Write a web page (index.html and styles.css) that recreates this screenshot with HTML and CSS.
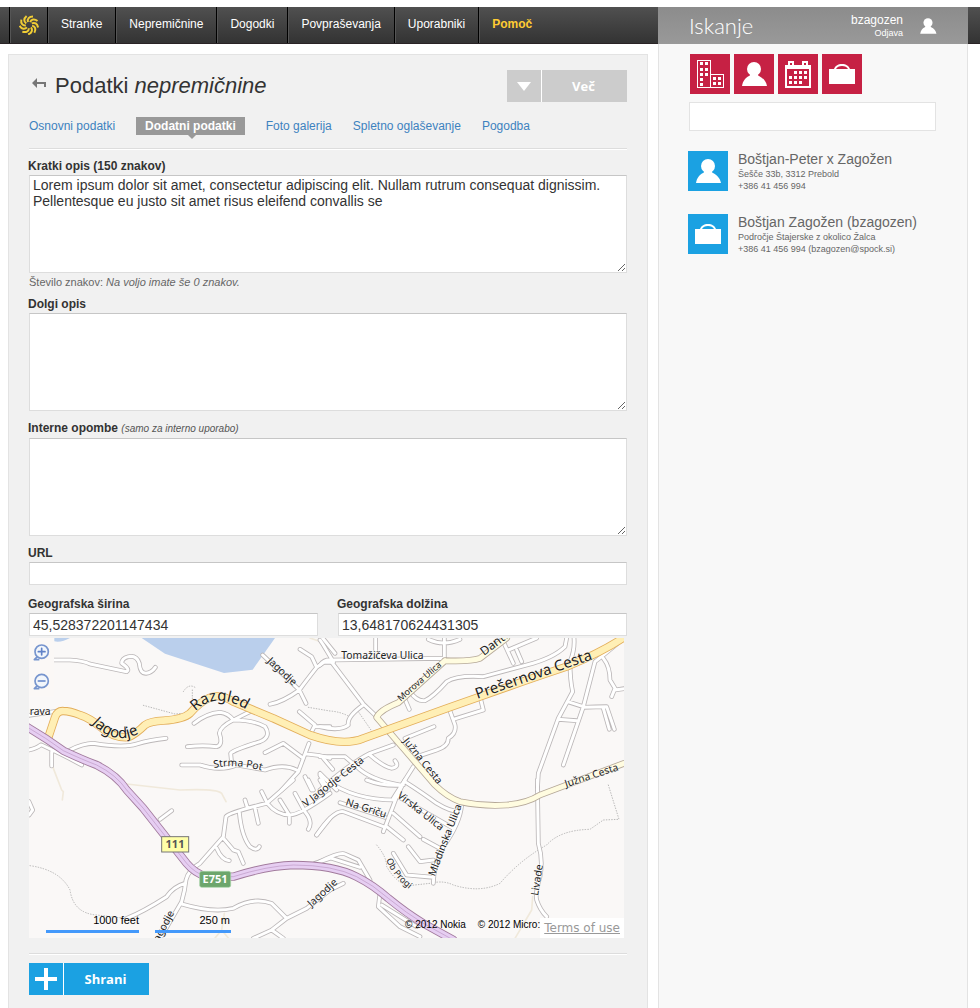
FILE: index.html
```html
<!DOCTYPE html>
<html lang="sl">
<head>
<meta charset="utf-8">
<title>Podatki nepremičnine</title>
<link rel="stylesheet" href="styles.css">
</head>
<body>
<svg class="sprite" aria-hidden="true">
  <symbol id="person" viewBox="0 0 40 40"><circle cx="20" cy="15" r="7"/><path d="M16 19h8c0 2 0 3 1 3 4 2 7 5 8 10H8c1-5 3-8 7-10 1 0 1-1 1-3z"/></symbol>
  <symbol id="bag" viewBox="0 0 40 40"><path d="M7 15h5c1-3 4-5 8-5s7 2 8 5h5v15H7zM14 15h12c-1-2-3-3-6-3s-5 1-6 3z" fill-rule="evenodd"/></symbol>
  <symbol id="buildings" viewBox="0 0 40 40"><path d="M7 6h14v14h13v14H7zM8 7v26h12V7zM21 21v12h12V21z" fill-rule="evenodd"/><path d="M10 8h3v3h-3zm5 0h3v3h-3zm-5 6h3v3h-3zm5 0h3v3h-3zm-5 5h3v3h-3zm5 0h3v3h-3zm-5 5h3v3h-3zm0 5h3v3h-3zm13-6h3v3h-3zm5 0h3v3h-3zm-5 5h3v3h-3zm5 0h3v3h-3z"/></symbol>
  <symbol id="calendar" viewBox="0 0 40 40"><path d="M7 11h3V7h6v4h8V7h6v4h3v23H7zM9 15v17h22V15zM12 9v2h2v-2zM26 9v2h2v-2z" fill-rule="evenodd"/><path d="M16 17h3v3h-3zm5 0h3v3h-3zm5 0h3v3h-3zm-15 5h3v3h-3zm5 0h3v3h-3zm5 0h3v3h-3zm5 0h3v3h-3zm-15 5h3v3h-3zm5 0h3v3h-3zm5 0h3v3h-3z"/></symbol>
</svg>

<header class="topbar">
  <nav class="nav">
    <a class="logo" href="#" aria-label="Domov">
      <svg viewBox="0 0 20 20" width="20" height="20">
        <defs><path id="ray" d="M9 7C8 4 10 1.500 14 1.500"/></defs>
        <use href="#ray"/><use href="#ray" transform="rotate(40 10 10)"/><use href="#ray" transform="rotate(80 10 10)"/><use href="#ray" transform="rotate(120 10 10)"/><use href="#ray" transform="rotate(160 10 10)"/><use href="#ray" transform="rotate(200 10 10)"/><use href="#ray" transform="rotate(240 10 10)"/><use href="#ray" transform="rotate(280 10 10)"/><use href="#ray" transform="rotate(320 10 10)"/>
      </svg>
    </a>
    <a href="#">Stranke</a>
    <a href="#">Nepremičnine</a>
    <a href="#">Dogodki</a>
    <a href="#">Povpraševanja</a>
    <a href="#">Uporabniki</a>
    <a class="help" href="#">Pomoč</a>
  </nav>
  <div class="search-head">
    <h2>Iskanje</h2>
    <div class="user"><span>bzagozen</span><a href="#">Odjava</a></div>
    <svg class="avatar"><use href="#person"/></svg>
  </div>
</header>

<div class="layout">
  <main class="card">
    <div class="title-row">
      <a class="back" href="#" aria-label="Nazaj"><svg viewBox="0 0 14 10" width="14" height="10"><path d="M0 5l5-5v4h9v5h-2V6H5v4z"/></svg></a>
      <h1>Podatki <em>nepremičnine</em></h1>
      <button class="split more" type="button"><span class="split-icon"><svg viewBox="0 0 14 9" width="14" height="9"><path d="M0 0h14L7 9z"/></svg></span><span class="split-text">Več</span></button>
    </div>
    <nav class="tabs">
      <a href="#">Osnovni podatki</a>
      <a class="active" href="#">Dodatni podatki</a>
      <a href="#">Foto galerija</a>
      <a href="#">Spletno oglaševanje</a>
      <a href="#">Pogodba</a>
    </nav>
    <form>
      <div class="field">
        <label for="short">Kratki opis (150 znakov)</label>
        <textarea id="short">Lorem ipsum dolor sit amet, consectetur adipiscing elit. Nullam rutrum consequat dignissim. Pellentesque eu justo sit amet risus eleifend convallis se</textarea>
        <p class="hint">Število znakov: <em>Na voljo imate še 0 znakov.</em></p>
      </div>
      <div class="field">
        <label for="long">Dolgi opis</label>
        <textarea id="long"></textarea>
      </div>
      <div class="field">
        <label for="notes">Interne opombe <em>(samo za interno uporabo)</em></label>
        <textarea id="notes"></textarea>
      </div>
      <div class="field url">
        <label for="url">URL</label>
        <input id="url" type="text">
      </div>
      <div class="pair">
        <div class="field"><label for="lat">Geografska širina</label><input id="lat" type="text" value="45,528372201147434"></div>
        <div class="field"><label for="lng">Geografska dolžina</label><input id="lng" type="text" value="13,648170624431305"></div>
      </div>

      <div class="map">
        <svg class="map-canvas" viewBox="27 24 1785 900" role="img" aria-label="Zemljevid">
          <defs>
            <g id="minor">
              <path d="M102 90H150Q190 92 210 102L320 125Q332 118 305 100Q305 85 325 80Q350 75 358 100Q360 130 378 130Q395 128 406 112M27 256L115 243M27 360Q50 355 62 345M95 365V408M65 345Q140 380 185 405M150 360Q190 340 220 340Q310 355 350 342Q390 330 438 325M522 280Q560 250 600 247Q625 250 640 270Q700 270 735 290Q755 320 720 335Q640 360 632 370L635 400M640 270Q600 290 598 310Q610 345 590 350Q550 345 502 350M640 270L690 245M485 405H540Q600 425 650 405L735 420Q790 400 830 420M735 368L790 340L850 385M867 340L850 385L835 425L785 480M860 372Q900 375 930 385M728 75L838 180L858 220M750 223Q790 215 838 180Q860 150 890 112L875 80L840 58M890 112L912 97H940M908 24L945 70M838 245L885 285L875 305M885 290H930M855 440L875 480M900 435L925 480"/>
              <path transform="translate(900 0)" d="M0 105Q15 85 40 90L370 85M40 95L10 45L0 30M30 90L130 222L170 260M167 24V60M0 290Q60 305 85 285Q80 260 130 225M373 24V90M325 28Q370 50 420 28M270 185Q290 215 315 212Q340 200 380 155Q410 135 490 140L620 105Q700 85 735 50L740 24M255 208L268 238M482 208L490 240L400 268M390 243L405 285Q410 310 385 325Q385 350 350 360L290 380M255 325L342 290M0 380H75L110 410Q150 450 240 465M220 345L150 370Q90 400 0 480M150 375Q190 410 215 415Q240 410 225 392M280 410L220 505M10 385L38 418M0 430L50 480M545 24L580 100M590 60L605 95M565 60L650 24M762 24Q765 60 750 95Q750 150 758 185L715 265L655 430L652 480M743 215L790 230L730 405M715 268L770 272M790 230L825 95Q845 80 905 30M850 85Q870 110 870 150L885 175L875 200M885 180L912 176M790 232Q830 230 860 230L883 298M850 235L868 298"/>
              <path transform="translate(0 450)" d="M27 65L38 90L27 105M420 118L455 92M320 415Q370 395 440 350Q460 320 495 310M415 485L485 365Q495 330 498 300Q505 270 540 250L610 170L618 110Q625 98 740 70L820 0M610 175L640 210L655 215L670 250M590 205Q605 240 628 242M658 98Q665 170 690 200Q710 215 718 200M705 85L715 130M675 60L682 82M725 35L742 70Q770 105 810 105Q840 105 930 40M780 60L808 105V130M825 40L855 95Q880 125 865 148M890 165L930 115M865 0L880 30M900 0L915 25M485 372Q580 400 640 385Q700 350 755 370L800 415L860 385L930 330M800 415L755 450L700 475M755 450L790 475M885 250L930 235"/>
              <path transform="translate(900 450)" d="M-10 165Q40 90 70 95L190 140M60 68L195 112M255 0L230 50L190 155M140 0Q190 20 250 15M20 0Q100 60 225 60M255 5Q310 40 350 70Q390 95 420 95M235 50L400 145M425 75Q420 130 370 200Q340 260 340 310M220 100L300 170M200 140L250 180M310 178L360 205M265 200L300 245L340 240M220 220L260 285L340 292M652 0L655 190Q670 240 660 290Q645 340 650 360Q660 390 680 410M0 245Q60 215 75 222L115 240L150 300M35 235L120 262M180 340L175 380L240 440L300 470M185 375L290 440M0 345L70 310"/>
            </g>
            <path id="light" d="M1275 92L1135 218Q1080 240 1070 262L1245 465Q1280 500 1320 515Q1390 530 1460 525Q1520 520 1560 495L1812 400M1275 92Q1350 95 1380 85L1460 24"/>
            <path id="yellow" d="M85 322L105 262Q112 242 130 243Q150 243 180 255Q210 265 240 290Q280 325 325 322Q350 310 375 285Q390 274 430 272Q490 268 510 250Q540 215 570 203Q600 190 640 215L760 265L870 315Q970 350 1030 325L1280 235L1380 200Q1520 150 1640 110Q1750 65 1815 20"/>
            <path id="motor" d="M20 290Q80 325 130 362Q190 390 230 405Q290 435 320 480L370 535L500 700Q525 730 560 740L640 740Q740 708 820 705Q940 705 1010 740Q1060 765 1105 805Q1160 850 1210 880L1300 930"/>
            <path id="t-jag" d="M215 280Q300 365 386 288"/>
            <path id="t-raz" d="M526 244Q590 178 690 246"/>
            <path id="t-str" d="M582 414Q650 400 725 422"/>
            <path id="t-ob" d="M1098 690Q1120 740 1165 775"/>
          </defs>
          <rect class="land" x="27" y="24" width="1785" height="900"/>
          <path class="water" d="M365 24L435 71L612 129L698 119L765 24zM103 24H150Q125 38 103 34z"/>
          <path class="trail" d="M98 410L125 480L130 485L127 510M320 462L480 480Q590 475 605 490L618 515M613 850L605 900L585 924M605 900L625 924M1538 800L1535 840L1485 925M870 24L910 38"/>
          <path class="dots" d="M370 226L465 252L490 250M490 185Q505 160 525 172M517 180V210M865 232L930 243Q960 245 985 258M1015 245L1055 303M30 707Q120 720 150 780Q160 850 230 855L315 865M1070 645Q1100 680 1100 710Q1130 760 1165 767L1230 760Q1270 750 1300 765Q1380 790 1440 760Q1500 690 1580 645Q1620 600 1710 598L1750 570L1797 568L1765 465"/>
          <use class="minor-edge" href="#minor"/><use class="minor-fill" href="#minor"/>
          <use class="light-edge" href="#light"/><use class="light-fill" href="#light"/>
          <use class="yellow-edge" href="#yellow"/><use class="yellow-fill" href="#yellow"/>
          <use class="motor-edge" href="#motor"/><use class="motor-fill" href="#motor"/><use class="motor-mid" href="#motor"/>
          <g class="labels">
            <text class="big"><textPath href="#t-jag">Jagodje</textPath></text>
            <text class="big"><textPath href="#t-raz">Razgled</textPath></text>
            <text class="big" transform="translate(1372 207) rotate(-19)">Prešernova Cesta</text>
            <text><textPath href="#t-str">Strma Pot</textPath></text>
            <text class="small"><textPath href="#t-ob">Ob Progi</textPath></text>
            <text x="29" y="254">rava</text>
            <text x="964" y="87">Tomažičeva Ulica</text>
            <text transform="translate(740 95) rotate(43)">Jagodje</text>
            <text class="small" transform="translate(1142 215) rotate(-41)">Morova Ulica</text>
            <text class="mid" transform="translate(1392 78) rotate(-37)">Dantu</text>
            <text transform="translate(1148 334) rotate(51)">Južna Cesta</text>
            <text transform="translate(1638 472) rotate(-18)">Južna Cesta</text>
            <text transform="translate(858 532) rotate(-38)">V Jagodje Cesta</text>
            <text transform="translate(975 525) rotate(18)">Na Griču</text>
            <text transform="translate(1130 500) rotate(38)">Virska Ulica</text>
            <text transform="translate(1244 740) rotate(-69)">Mladinska Ulica</text>
            <text transform="translate(1554 798) rotate(-81)">Livade</text>
            <text transform="translate(874 832) rotate(-42)">Jagodje</text>
            <text transform="translate(413 944) rotate(-62)">Jagodje</text>
          </g>
          <rect class="sign-yellow" x="425" y="620" width="81" height="46"/>
          <text class="sign dark" x="465" y="654">111</text>
          <rect class="sign-green" x="539" y="724" width="93" height="48" rx="6"/>
          <text class="sign" x="585" y="760">E751</text>
          <rect class="panel" x="27" y="24" width="75" height="176"/>
          <g class="zoomers"><path d="M52 80L43 89H56M52 167L43 176H56"/><circle cx="65" cy="65" r="20"/><circle cx="65" cy="153" r="20"/><path class="sym" d="M55 65H75M65 55V75M55 153H75"/></g>
        </svg>
        <div class="scales"><span class="feet">1000 feet</span><span class="metres">250 m</span></div>
        <div class="credits"><span>© 2012 Nokia</span><span>© 2012 Micro:</span><a href="#">Terms of use</a></div>
      </div>

      <div class="actions">
        <button class="split save" type="submit"><span class="split-icon"><svg viewBox="0 0 22 22" width="22" height="22"><path d="M9 0h4v9h9v4h-9v9H9v-9H0V9h9z"/></svg></span><span class="split-text">Shrani</span></button>
      </div>
    </form>
  </main>

  <aside class="sidebar">
    <div class="filters">
      <button type="button" aria-label="Nepremičnine"><svg><use href="#buildings"/></svg></button>
      <button type="button" aria-label="Stranke"><svg><use href="#person"/></svg></button>
      <button type="button" aria-label="Dogodki"><svg><use href="#calendar"/></svg></button>
      <button type="button" aria-label="Povpraševanja"><svg><use href="#bag"/></svg></button>
    </div>
    <input class="search" type="text" aria-label="Iskanje">
    <ul class="results">
      <li><svg class="tile"><use href="#person"/></svg><div><h3>Boštjan-Peter x Zagožen</h3><p>Šešče 33b, 3312 Prebold</p><p>+386 41 456 994</p></div></li>
      <li><svg class="tile"><use href="#bag"/></svg><div><h3>Boštjan Zagožen (bzagozen)</h3><p>Področje Štajerske z okolico Žalca</p><p>+386 41 456 994 (bzagozen@spock.si)</p></div></li>
    </ul>
  </aside>
</div>
</body>
</html>
```
FILE: styles.css
```css
* { box-sizing: border-box; }
body { margin: 0; padding-top: 7px; min-height: 100vh; display: flex; flex-direction: column; background: #fff; color: #333; font: 12px/16px "Liberation Sans", Arial, sans-serif; }
h1, h2, h3, p, ul { margin: 0; padding: 0; font-weight: normal; }
ul { list-style: none; }
a { text-decoration: none; }
button { border: 0; padding: 0; font: inherit; cursor: pointer; }
.sprite { display: none; }

.topbar { display: flex; height: 37px; padding: 0 12px 0 9px; background: linear-gradient(#505050, #333); border-bottom: 1px solid #2a2426; }
.nav { flex: 1; display: flex; }
.nav a { display: flex; align-items: center; padding: 0 13px 3px; color: #fff; border-left: 1px solid #000; box-shadow: inset 1px 0 #555; }
.nav .logo { padding: 0 8px 1px 9px; }
.logo svg { fill: none; stroke: #f0cd35; stroke-width: 2; }
.nav .help { color: #fc3; font-weight: bold; }
.search-head { width: 310px; height: 37px; display: flex; align-items: center; padding: 0 27px 0 31px; background: linear-gradient(#8c8c8c, #999); color: #fff; }
.search-head h2 { flex: 1; font: 300 22px/36px Lato, "Open Sans", sans-serif; }
.user { display: flex; flex-direction: column; text-align: right; line-height: 13px; padding-top: 2px; }
.user a { color: #fff; font-size: 9px; line-height: 12px; }
.avatar { width: 26px; height: 26px; margin-left: 12px; fill: #fff; }

.layout { flex: 1; display: flex; }
.card { flex: 1; margin: 10px 10px 0 8px; padding: 15px 20px 12px; background: #f1f1f1; border: 1px solid #e3e3e3; border-bottom: 0; min-width: 0; }
.title-row { display: flex; align-items: flex-start; height: 32px; }
.back { width: 26px; padding: 8px 0 0 3px; line-height: 0; }
.back svg { fill: #777; }
h1 { flex: 1; font-size: 22px; line-height: 32px; }
.split { display: flex; gap: 1px; height: 32px; background: #fff; color: #fff; font: bold 13px/32px "Open Sans", sans-serif; }
.split span { background: #ccc; height: 32px; }
.split-icon { width: 34px; display: flex; align-items: center; justify-content: center; }
.split-text { width: 85px; padding-right: 2px; }
.split svg { fill: #fff; }
.save span { background: #1ba1e2; }

.tabs { display: flex; gap: 21px; margin-top: 15px; padding-bottom: 13px; border-bottom: 1px solid #ddd; box-shadow: 0 1px #fff; line-height: 18px; }
.tabs a { color: #3d82bf; }
.tabs .active { position: relative; padding: 0 9px; background: #999; color: #fff; font-weight: bold; }
.active::after { content: ""; position: absolute; left: 52px; top: 100%; border: 4px solid transparent; border-top-color: #999; border-bottom: 0; }

form { padding-top: 9px; }
.field { margin-bottom: 9px; }
.field label { display: block; font-weight: bold; line-height: 16px; margin: 0 0 1px -1px; }
.field label em { font-weight: normal; font-size: 10px; color: #555; }
textarea, input { display: block; width: 100%; margin: 0; padding: 0 3px; background: #fff; color: #333; border: 1px solid #ddd; border-top-color: #c6c6c6; border-radius: 0; font: 14px/16px "Liberation Sans", Arial, sans-serif; }
textarea { height: 98px; padding-top: 1px; }
form input { height: 23px; }
.hint { font-size: 11px; line-height: 18px; color: #666; }
.field:has(.hint) { margin-bottom: 5px; }
.field:has(.hint) + .field { margin-bottom: 9px; }
.url { margin-bottom: 11px; }
.pair { display: grid; grid-template-columns: 1fr 1fr; gap: 20px; }
.pair .field { margin-bottom: 2px; }

.map { position: relative; margin-right: 3px; overflow: hidden; color: #000; }
.map-canvas { display: block; width: 100%; }
.land { fill: #faf8f7; }
.water { fill: #bacfec; }
.map-canvas path, .map-canvas use { stroke-linejoin: round; stroke-linecap: round; }
.map-canvas use, .trail, .dots { fill: none; }
.trail { stroke: #f0e9db; stroke-width: 5; }
.dots { stroke: #999; stroke-width: 2; stroke-dasharray: 2 6; }
.minor-edge { stroke: #bbb7b8; stroke-width: 14; }
.minor-fill { stroke: #fff; stroke-width: 9; }
.light-edge { stroke: #b5a899; stroke-width: 20; }
.light-fill { stroke: #fffce0; stroke-width: 15; }
.yellow-edge { stroke: #e3ae5b; stroke-width: 25; }
.yellow-fill { stroke: #ffefb5; stroke-width: 20; }
.motor-edge { stroke: #a17a9c; stroke-width: 25; }
.motor-fill { stroke: #e6cef2; stroke-width: 20; }
.motor-mid { stroke: #bd98c4; stroke-width: 2; }
.labels { font: 31px "Noto Sans", sans-serif; fill: #222; stroke: #fff; stroke-width: 3; stroke-opacity: .6; paint-order: stroke; }
.labels .big { font-size: 45px; }
.labels .mid { font-size: 36px; }
.labels .small { font-size: 27px; }
.sign { font: bold 33px "Noto Sans", sans-serif; fill: #fff; text-anchor: middle; }
.sign.dark { fill: #555; }
.sign-yellow { fill: #ffffa8; stroke: #777; stroke-width: 3; }
.sign-green { fill: #6ca66c; stroke: #a8d3a8; stroke-width: 2; }
.panel { fill: #fbf8f6; }
.zoomers { fill: #f2f6fb; stroke: #7795ce; stroke-width: 5; }
.zoomers .sym { stroke: #6082c8; stroke-width: 5; }
.scales { position: absolute; left: 17px; bottom: 5px; display: flex; gap: 16px; font-size: 11px; line-height: 12px; text-align: right; }
.scales span { border-bottom: 3px solid #4499fb; padding-bottom: 4px; }
.feet { width: 93px; }
.metres { width: 76px; padding-right: 1px; }
.credits { position: absolute; right: 0; bottom: 0; display: flex; align-items: flex-end; gap: 12px; font-size: 10px; line-height: 26px; }
.credits span + span { margin-right: -12px; }
.credits a { padding: 0 4px; background: #fff; color: #999; font: 12px/20px "DejaVu Sans", sans-serif; text-decoration: underline; }
.actions { margin-top: 15px; padding-top: 9px; border-top: 1px solid #ddd; box-shadow: inset 0 1px #fff; }

.sidebar { width: 310px; margin-right: 12px; padding: 10px 32px 0 29px; background: #f8f8f8; border: solid #e3e3e3; border-width: 0 1px; }
.filters { display: flex; gap: 4px; padding-left: 2px; }
.filters button { width: 40px; height: 40px; background: #c62144; }
.filters svg { display: block; width: 40px; height: 40px; fill: #fff; }
.search { height: 29px; margin: 8px 0 20px 1px; border-color: #e3e3e3; }
.results li { display: flex; gap: 10px; margin-bottom: 22px; color: #666; }
.tile { flex: none; width: 40px; height: 40px; background: #1ba1e2; fill: #fff; }
.results h3 { font-size: 14px; line-height: 17px; }
.results p { font-size: 9px; line-height: 12px; white-space: nowrap; }
```
